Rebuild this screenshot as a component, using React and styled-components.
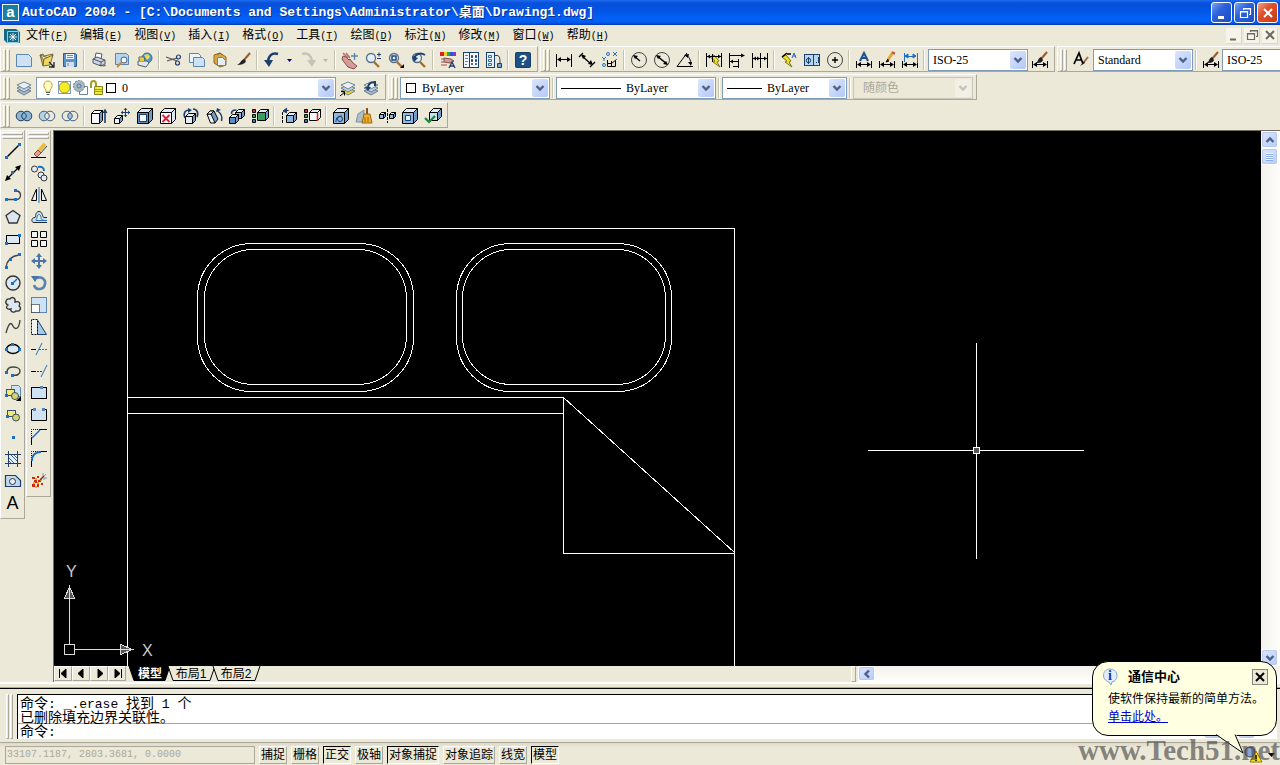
import React from 'react';
import styled, { createGlobalStyle, css } from 'styled-components';

const GlobalStyle = createGlobalStyle`
  *, *::before, *::after {
    box-sizing: border-box;
  }

  body {
    margin: 0;
    overflow: hidden;
    background: #ece9d8;
    color: #000;
    font: 12px/16px 'Liberation Sans', 'Noto Sans CJK SC', sans-serif;
  }

  button, select, input {
    margin: 0;
    padding: 0;
    border: 0;
    background: none;
    color: inherit;
    font: inherit;
  }
`;

/* ---------- drawings ---------- */

const NAVY = '#1c3f6e';
const SKY = '#cfe2f3';
const STEEL = '#5b86b0';
const BLUE = '#1f6fc0';

const Svg = styled.svg`
  display: block;
  flex: none;
  overflow: visible;
  fill: none;
  stroke: #000;
`;

const Dots = ({ at, color = BLUE }) => (
  <g fill={color} stroke="none">
    {at.map(([x, y]) => <rect key={`${x}-${y}`} x={x} y={y} width="3" height="3" />)}
  </g>
);

const Cube = ({ x = 2, y = 2, s = 8, d = 4, fill = '#8fb8de', top = '#e4eef8', side = '#6f9cc8' }) => (
  <g transform="translate(-.5 -.5)" strokeLinejoin="round">
    <path d={`M${x} ${y + d}l${d} ${-d}h${s}l${-d} ${d}z`} fill={top} />
    <path d={`M${x + s} ${y + d}l${d} ${-d}v${s}l${-d} ${d}z`} fill={side} />
    <path d={`M${x} ${y + d}h${s}v${s}h${-s}z`} fill={fill} />
  </g>
);

const Swatches = () => (
  <g>
    <path d="M.5 1.500h3v3h-3z" fill="#e02b2b" />
    <path d="M.5 6.500h3v3h-3z" fill="#37a05c" />
    <path d="M.5 11.500h3v3h-3z" fill="#2f7fd0" />
  </g>
);

const Lens = () => (
  <g>
    <path d="M9 10l5 5" stroke="#a8702c" strokeWidth="2.4" />
    <circle cx="6" cy="6" r="4.5" fill="#e3eef7" stroke="#56708a" strokeWidth="1.3" />
  </g>
);

const Brush = () => (
  <g>
    <path d="M15 1L9 8" stroke="#9a5a33" strokeWidth="2" />
    <path d="M9 7l2 2c-1 3-5 4-9 4c3-1 4-5 7-6z" fill="#222" stroke="none" />
  </g>
);

const Stack = ({ low = '#a9bccd' }) => (
  <g strokeWidth="0.8" stroke="#51697f">
    <path d="M1 11l7-3l7 3l-7 4z" fill={low} />
    <path d="M1 8l7-3l7 3l-7 4z" fill="#c3d2df" />
    <path d="M1 5l7-3l7 3l-7 4z" fill="#e8eff5" />
  </g>
);

const DimBar = () => (
  <g>
    <path d="M.5 9v7M15.5 9v7M2 12.5h12" />
    <path d="M1 12.5l4-2.5v5zM15 12.5l-4-2.5v5z" fill="#000" stroke="none" />
  </g>
);

const Bolt = ({ x = 0 }) => (
  <path d={`M${6 + x} 3l5 6l-2 1l3 5l-7-5l2-1l-5-4z`} fill="#f3e11c" stroke="#5d5608" strokeWidth="0.8" />
);

const glyphs = {
  fresh: <path d="M.5 2.500h12l3 3v9h-15z" fill={SKY} stroke={STEEL} />,
  open: (
    <g stroke="#6c6230" strokeWidth="0.9">
      <path d="M1 3l3-1l1 2l9-2l-2 5z" fill="#f2e08a" />
      <path d="M1 3l4 5l-1 6z" fill="#cbb24a" />
      <path d="M5 7l9-4l-3 10l-7 1z" fill="#efd65c" />
      <path d="M10 15h5v-5M15 15l-5-5" stroke="#222" strokeWidth="1.3" />
    </g>
  ),
  save: (
    <g>
      <path d="M1.5 1.5h12l1 1v12h-13z" fill="#5a92cc" stroke="#2b5c92" />
      <path d="M4 2h8v5H4z" fill="#edf3fa" stroke="none" />
      <path d="M4 10h8v5H4z" fill="#d5dfe9" stroke="none" />
      <path d="M5 3.5h6M5 5.5h6M6 11v3" stroke="#6d8cab" />
    </g>
  ),
  print: (
    <g stroke="#4d5a6a">
      <path d="M5 1l6 1l-1 5l-6-1z" fill="#fff" />
      <path d="M2 7l4-2l8 3v4l-4 2l-8-3z" fill="#ccd5e0" />
      <path d="M2 7l8 3v4M10 10l4-2" />
      <path d="M8 13l5 1l2-1" stroke="#555" />
    </g>
  ),
  preview: (
    <g>
      <path d="M1.5 1.5h11l2 2v9h-13z" fill="#b4d4ef" stroke={STEEL} />
      <circle cx="10" cy="8" r="3" fill="#f1f6fb" stroke="#445f7c" />
      <path d="M8 10l-5 5" stroke="#c78c3b" strokeWidth="2" />
    </g>
  ),
  publish: (
    <g>
      <circle cx="10" cy="6" r="5" fill="#4f9ad6" stroke="#356a96" />
      <path d="M7 3l4-1l2 3l-3 3z" fill="#f2dc3f" stroke="none" />
      <path d="M2 5h5l1 3h-6zM1 9h9l2 2l-3 4l-8-2z" fill="#e4e6ea" stroke="#53606e" />
      <path d="M3 6h4v3h-4z" fill="#f2c938" stroke="none" />
    </g>
  ),
  cut: (
    <g strokeWidth="1.2">
      <path d="M0 5l11 4M1 9l10-3" stroke="#555" />
      <circle cx="12.500" cy="5" r="2" stroke={NAVY} />
      <circle cx="11.500" cy="11" r="2" stroke={NAVY} />
    </g>
  ),
  copy: (
    <g stroke={STEEL}>
      <path d="M.5 1.500h9l2 2v7h-11z" fill="#eef5fb" />
      <path d="M4.500 5.500h9l2 2v7h-11z" fill={SKY} />
    </g>
  ),
  paste: (
    <g>
      <path d="M2 3l6-2l6 4v8l-6 2l-6-4z" fill="#d9a844" stroke="#8a6a22" />
      <path d="M5.500 5.500h5l3 3v5h-8z" fill="#e2eef9" stroke={STEEL} />
      <path d="M5 3l3-2l2 2" stroke="#666" />
    </g>
  ),
  brush: <Brush />,
  undo: (
    <g stroke={NAVY}>
      <path d="M14 2C8 0 4 4 4 11" strokeWidth="2.600" />
      <path d="M0 8h9l-4 7z" fill={NAVY} stroke="none" />
    </g>
  ),
  redo: (
    <g stroke="#c5c3b8">
      <path d="M2 2c6-2 10 2 10 9" strokeWidth="2.600" />
      <path d="M7 8h9l-4 7z" fill="#c5c3b8" stroke="none" />
    </g>
  ),
  pan: (
    <g>
      <path d="M1 4l3 1l3 3l1-1l3 4l4 3l-3 3l-6-2l-4-5l-2-3z" fill="#d79a94" stroke="#80524f" />
      <path d="M1 1l5 5M4 1l4 5" stroke="#b56f69" strokeWidth="1.500" />
      <path d="M9 4h7M12.500 1v7" stroke={STEEL} strokeWidth="1.400" />
    </g>
  ),
  zoomRealtime: (
    <g><Lens /><path d="M12 2.500h4M14 .5v4M12 6.500h4" stroke={NAVY} /></g>
  ),
  zoomWindow: (
    <g><Lens /><rect x="4" y="4" width="4" height="4" stroke={NAVY} strokeWidth="1.400" /><path d="M16 12v4h-4z" fill="#000" stroke="none" /></g>
  ),
  zoomPrevious: (
    <g><Lens /><path d="M3 7c1-5 6-7 11-4" stroke={NAVY} strokeWidth="2" /><path d="M1 4l6 2l-4 4z" fill={NAVY} stroke="none" /></g>
  ),
  properties: (
    <g stroke="none">
      <path d="M0 0h4v4H0z" fill="#d81f2a" /><path d="M4 0h3v4H4z" fill="#f0d51d" />
      <path d="M7 0h3v4H7z" fill="#28a83a" /><path d="M10 0h3v4h-3z" fill="#2a55cf" />
      <path d="M13 0h3v4h-3z" fill="#a12cc0" />
      <path d="M4 6l7 1l3 2l-4 2l-6-1z" fill="#d79a94" stroke="#80524f" />
      <path d="M1 7h3M1 10h3M1 13h6" stroke="#b04a40" />
      <path d="M9 16l3-6l3 6M10 14h4" stroke={NAVY} strokeWidth="1.300" />
    </g>
  ),
  designCenter: (
    <g>
      <rect x=".5" y=".5" width="15" height="15" fill="#f4f8fc" stroke={NAVY} />
      <path d="M6.500 1v14" stroke={NAVY} />
      <path d="M2 3.500h3M2 6.500h3M2 9.500h3M2 12.500h2" stroke={STEEL} />
      <g stroke={NAVY}><path d="M8.500 3.500h1v2h-1zM12.500 3.500h1v2h-1zM8.500 7.500h1v2h-1zM12.500 7.500h1v2h-1zM8.500 11.500h1v1h-1zM12.500 11.500h1v1h-1z" /></g>
    </g>
  ),
  toolPalettes: (
    <g>
      <rect x=".5" y=".5" width="8" height="15" fill="#e9f2fa" stroke={NAVY} />
      <path d="M2.500 3.500h3v2h-3zM2.500 7.500h3v2h-3zM2.500 11.500h3v2h-3z" stroke={BLUE} />
      <path d="M8 3.500h3c3 0 3 4 3 8" stroke={NAVY} />
      <path d="M11.500 11.500h4v4h-4z" fill="#79a3cb" stroke={NAVY} />
    </g>
  ),
  help: (
    <g>
      <rect x=".5" y=".5" width="15" height="15" rx="1" fill="#1c5086" stroke="#173e67" />
      <text x="8" y="13" fontFamily="Liberation Sans, sans-serif" fontSize="14" fontWeight="bold" textAnchor="middle" fill="#fff" stroke="none">?</text>
    </g>
  ),
  dimLinear: (
    <g><path d="M.5 2v13M15.500 2v13M2 7.500h12" /><path d="M1 7.500l4-2.500v5zM15 7.500l-4-2.500v5z" fill="#000" stroke="none" /></g>
  ),
  dimAligned: (
    <g><path d="M0 5l4-4M11 15l5-5M3 4l9 8" strokeWidth="1.300" /><path d="M2 2l5 2l-3 3zM14 13l-5-1l3-4z" fill="#000" stroke="none" /></g>
  ),
  dimOrdinate: (
    <g>
      <path d="M5.500 8v6.500h8V9M5.500 11.500h4l5-4M9.500 15V9" />
      <path d="M11 0l4 4M15 0l-4 4M0 5l2 2l2-2M2 7v2" stroke={BLUE} />
      <circle cx="6" cy="2" r="1.500" stroke={BLUE} /><circle cx="2" cy="13" r="1.500" stroke={BLUE} />
    </g>
  ),
  dimRadius: (
    <g><circle cx="8" cy="8" r="7.500" stroke="#444" /><path d="M3 4l6 5" strokeWidth="1.300" /><path d="M2 3l5 1l-3 3z" fill="#000" stroke="none" /></g>
  ),
  dimDiameter: (
    <g><circle cx="8" cy="8" r="7.500" stroke="#444" /><path d="M3 4l10 8" strokeWidth="1.600" /><path d="M2 3l5 1l-3 3zM14 13l-5-1l3-3z" fill="#000" stroke="none" /></g>
  ),
  dimAngular: (
    <g><path d="M10 1L0 14.500h16" /><path d="M9 3c3 1 5 6 5 9" /><path d="M7 3l5-1l-1 4zM14 14l-3-4h4z" fill="#000" stroke="none" /></g>
  ),
  dimQuick: (
    <g><Bolt x={2} /><path d="M.5 1v14M15.500 1v14M6.500 2v8M1 4.500h14" /><path d="M1 4.500l3-2v4zM15 4.500l-3-2v4z" fill="#000" stroke="none" /></g>
  ),
  dimBaseline: (
    <g><path d="M.5 1v15M1 3.500h13M9.500 7v9M1 9.500h8M4 14.500h5" /><path d="M16 3.500l-4-2v4zM1 9.500l3-2v4z" fill="#000" stroke="none" /></g>
  ),
  dimContinue: (
    <g><path d="M.5 1v15M8.500 1v15M15.500 1v15M1 6.500h14" /><path d="M1 6.500l3-2v4zM8 6.500l-3-2v4zM15 6.500l-3-2v4z" fill="#000" stroke="none" /></g>
  ),
  leader: (
    <g><Bolt x={-1} /><path d="M1 5l5-4M6 2h4" strokeWidth="1.600" /><path d="M11 6l2-5l2 5M12 4h3" stroke={BLUE} /></g>
  ),
  tolerance: (
    <g stroke={NAVY}><rect x=".5" y="2.500" width="15" height="11" fill="#b8d6f0" /><path d="M9.500 3v10M4.500 5v7M12 10.500h1M14.500 5v6" /><circle cx="4.500" cy="8.500" r="2.200" /></g>
  ),
  centerMark: <g><circle cx="8" cy="8" r="7.500" stroke="#444" /><path d="M5 8h6M8 5v6" strokeWidth="1.400" /></g>,
  dimTextEdit: <g><DimBar /><path d="M4 9l4-8l4 8M5 6h6" stroke="#1f4f8f" strokeWidth="2" /></g>,
  dimEdit: <g><DimBar /><path d="M14 0L9 8" stroke="#e2a63a" strokeWidth="3" /><path d="M9 7l-2 3l3-1" fill="#222" /><path d="M15 0l-1 2" stroke="#c9483b" strokeWidth="3" /></g>,
  dimUpdate: <g><DimBar /><path d="M2.500 1v9M15.500 1v10M3 4.500h11M3 4l3-2v4zM14 4l-3-2v4z" stroke={BLUE} fill={BLUE} /></g>,
  dimStyle: <g><DimBar /><path d="M15 0L9 7" stroke="#9a5a33" strokeWidth="2" /><path d="M9 5l2 3c-1 3-4 3-7 3c2-1 2-5 5-6z" fill="#222" stroke="none" /></g>,
  textStyle: <g><path d="M1 12L6 1l4 11M3 8h6" strokeWidth="1.700" /><path d="M15 5l-4 5" stroke="#a8673c" strokeWidth="2" /><path d="M11 9l1 2l-5 3z" fill="#222" stroke="none" /></g>,

  layers: <Stack />,
  bulb: (
    <g><path d="M5 10C1 6 3 1 7 1s6 5 2 9v2H5z" fill="#fffcc0" stroke="#b5a52e" /><path d="M5 12.500h4M5.500 14.500h3" stroke="#555" /></g>
  ),
  sun: <g><rect x="1.500" y="1.500" width="12" height="12" stroke="#7d9cba" /><circle cx="7.500" cy="7.500" r="5.500" fill="#f6ec24" stroke="#9d942e" /></g>,
  viewport: <g><path d="M6.500 6.500h8v8h-8z" fill="#fff" stroke="#6f8496" /><circle cx="6" cy="6" r="5.500" fill="#a7bac4" stroke="#61788a" strokeDasharray="2 1" /><circle cx="6" cy="6" r="2" stroke="#61788a" /></g>,
  unlock: <g><path d="M2 8V4c0-4 5-4 5 0v4" stroke="#a59d24" strokeWidth="2" /><path d="M5.500 6.500h8v8h-8z" fill="#efe83d" stroke="#8d861b" /><path d="M6 9.500h7M6 11.500h7" stroke="#a59d24" /></g>,
  swatch: <rect x="1.500" y="1.500" width="9" height="9" fill="#fff" strokeWidth="1" />,
  makeCurrent: <g><Stack low="#ead43e" /><path d="M0 16l5-4M1 11.500h3.500v4" /></g>,
  layerPrevious: <g><Stack /><path d="M5 8c0-4 3-6 7-6v4" stroke={NAVY} strokeWidth="2" /><path d="M2 7h6l-3 4z" fill={NAVY} stroke="none" /></g>,

  union: <g stroke={NAVY} fill="#8fb5cf"><circle cx="5" cy="8" r="4.800" /><circle cx="11" cy="8" r="4.800" /><path d="M8 4.500c-3 2-3 5 0 7c3-2 3-5 0-7" /></g>,
  subtract: <g stroke="#3e638c"><circle cx="11" cy="8" r="4.800" /><circle cx="5" cy="8" r="4.800" fill="#b7d0e2" /><path d="M8 4.500c-3 2-3 5 0 7c3-2 3-5 0-7" fill="#ece9d8" /></g>,
  intersect: <g stroke="#3e638c"><circle cx="5" cy="8" r="4.800" /><circle cx="11" cy="8" r="4.800" /><path d="M8 4.500c-3 2-3 5 0 7c3-2 3-5 0-7" fill="#9fc1da" /></g>,
  extrudeFace: (
    <g strokeLinejoin="round">
      <path d="M.5 5.500l3-3h8l-3 3z" fill="#fff" />
      <path d="M8.500 5.500l3-3v10l-3 3z" fill="#6f9cc8" />
      <path d="M.5 5.500h8v10h-8z" fill="#f7fafc" />
      <path d="M14 15V4" stroke={NAVY} strokeWidth="1.600" />
      <path d="M11.500 5L14 .5L16.500 5z" fill={NAVY} stroke="none" />
    </g>
  ),
  moveFace: <g><Cube x={1} y={8} s={5} d={3} fill="#f2f6fa" /><path d="M7 4.500h9M11.500 0v9" stroke={NAVY} /><path d="M11.500 0l2 2h-4zM11.500 9l2-2h-4zM7 4.500l2-2v4zM16 4.500l-2-2v4z" fill={NAVY} stroke="none" /></g>,
  offsetFace: <g><Cube x={1} y={1} s={11} d={4} fill="#5b8fc2" /><path d="M2.500 6.500h7v7h-7z" fill="#f7fafc" stroke={NAVY} /></g>,
  deleteFace: <g><Cube x={1} y={1} s={11} d={4} fill="#f7fafc" side="#dbe6f0" /><path d="M2.500 7l7 7M9.500 7l-7 7" stroke="#e01b2d" strokeWidth="1.800" /></g>,
  rotateFace: <g><Cube x={3} y={6} s={7} d={3} fill="#e2edf7" /><path d="M2 10c-2-5 0-8 4-8M10 1c4 0 6 4 4 8" stroke={NAVY} strokeWidth="1.700" /><path d="M5 0l4 2l-4 3z" fill={NAVY} stroke="none" /></g>,
  taperFace: <g strokeLinejoin="round"><path d="M1 6l3-3l4 0l4 8l-3 4z" fill="#6f9cc8" /><path d="M1 6l3.500 9h4.500L5 6z" fill="#eef5fb" /><path d="M1 6l3-3h4L5 6z" fill="#fff" /><path d="M15.500 13c1-4-1-8-4-10" stroke={NAVY} strokeWidth="1.500" /><path d="M10 4l1-4l4 2z" fill={NAVY} stroke="none" /></g>,
  copyFace: <g><Cube x={7} y={2} s={6} d={3} /><Cube x={1} y={7} s={6} d={3} fill="#5b8fc2" /><path d="M2.500 6c0-3 1-4 5-4" stroke={NAVY} strokeWidth="1.600" /></g>,
  colorFace: <g><Cube x={6} y={2} s={8} d={3} fill="#37a05c" /><Swatches /></g>,
  copyEdge: <g><Cube x={6} y={5} s={7} d={3} /><path d="M1.500 15V5c0-2 2-3 6-2.500" strokeDasharray="3 1" /><path d="M6 0L2 3l4 2" fill={NAVY} stroke={NAVY} /></g>,
  colorEdge: <g><Cube x={6} y={2} s={8} d={3} fill="#f8fafc" side="#f8fafc" /><path d="M13.500 5v8" stroke="#e02b2b" strokeWidth="1.600" /><Swatches /></g>,
  imprint: <g><Cube x={1} y={1} s={11} d={4} /><path d="M3 14c0-5 2-6 6-6" stroke={NAVY} /><circle cx="7" cy="11" r="2.500" stroke={NAVY} /></g>,
  clean: <g><path d="M0 14h8V2L2 6z" fill="#aebfcc" stroke="#7890a4" /><path d="M11 0v6" stroke="#8a4d1c" strokeWidth="2" /><path d="M8 6h6l2 9H6z" fill="#f1b02d" stroke="#9d6512" /><path d="M9 9v5M12 9v5" stroke="#9d6512" /></g>,
  separate: <g><Cube x={1} y={5} s={4} d={2} /><Cube x={11} y={5} s={4} d={2} /><path d="M8.500 1v14" strokeDasharray="3 1" /></g>,
  shell: <g><Cube x={1} y={1} s={11} d={4} /><path d="M3.500 7.500h5v5h-5z" fill="#e9f2fa" stroke={NAVY} /></g>,
  check: <g><Cube x={5} y={1} s={8} d={4} fill="#c8dff0" /><path d="M0 10l4 4l6-6" stroke="#168a38" strokeWidth="2.200" /></g>,

  line: <g><path d="M2 14L14 2" strokeWidth="1.500" /><Dots at={[[0, 13], [13, 0]]} /></g>,
  xline: <g><path d="M2 14L14 2" strokeWidth="1.300" /><path d="M0 16l2-6l4 4zM16 0l-6 2l4 4z" fill="#000" stroke="none" /><Dots at={[[6, 6]]} /></g>,
  polyline: <g><path d="M2 12.500h9M11 4c6 0 6 8.500 0 8.500" stroke="#444" strokeWidth="1.400" /><Dots at={[[0, 11], [9, 2], [9, 11]]} /></g>,
  polygon: <path d="M8 1.500l7 5l-3 7.500H4L1 6.500z" fill="#dce6ee" stroke="#333" strokeWidth="1.300" />,
  rectangle: <g><rect x="1.500" y="4.500" width="13" height="8" fill="#dce8f2" /><Dots at={[[0, 11], [13, 3]]} /></g>,
  arc: <g><path d="M1 14C2 8 6 3 14 2" stroke="#444" strokeWidth="1.400" /><Dots at={[[0, 13], [4, 5], [13, 0]]} /></g>,
  circle: <g><circle cx="8" cy="8" r="7" fill="#dce8f2" stroke="#333" strokeWidth="1.400" /><path d="M8 8l4-4" stroke={BLUE} strokeWidth="1.500" /><Dots at={[[6, 7]]} /></g>,
  cloud: <path d="M3 8C-1 6 1 1 5 2c2-3 6-1 5 3c4-1 6 1 4 4c3 2 1 6-3 5c-2 2-6 1-5-2c-4 1-6-2-3-4z" fill="#dfe7ee" stroke="#333" strokeWidth="1.300" />,
  spline: <path d="M1 14C4 3 6 3 8 7s6 4 7-6" stroke="#444" strokeWidth="1.400" />,
  ellipse: <g><ellipse cx="8" cy="8" rx="6.500" ry="4.500" fill="#dce8f2" strokeWidth="1.400" /><Dots at={[[0, 7], [6, 2], [13, 7]]} /></g>,
  ellipseArc: <g><path d="M2 9c0-7 13-6 13-1c0 3-3 5-7 4" stroke="#444" strokeWidth="1.500" /><Dots at={[[0, 8], [6, 11]]} /></g>,
  insertBlock: <g><path d="M6.500 .5h7l2 2v9h-9z" fill={SKY} stroke={STEEL} /><rect x="1.500" y="4.500" width="8" height="6" fill="#f0ea7a" stroke="#37506b" /><circle cx="10" cy="11" r="3.500" fill="#d6d36d" stroke="#37506b" /><path d="M16 11v5h-5z" fill="#000" stroke="none" /><Dots at={[[0, 9]]} /></g>,
  makeBlock: <g><rect x="2.500" y="3.500" width="8" height="6" fill="#f0ea7a" stroke="#37506b" /><circle cx="11" cy="10.500" r="3.500" fill="#d6d36d" stroke="#37506b" /><Dots at={[[1, 8]]} /></g>,
  point: <Dots at={[[7, 7]]} />,
  hatch: <g stroke={NAVY}><rect x="3.500" y="3.500" width="9" height="9" fill="#e4eff8" /><path d="M0 3.500h16M0 12.500h16M3.500 0v16M12.500 0v16" /><path d="M3 6l7 7M3 9l4 4M5 3l8 8M8 3l5 5" strokeWidth=".8" /></g>,
  region: <g><path d="M.5 2.500h10l5 5v6H.5z" fill="#c1d9ec" stroke={NAVY} strokeWidth="1.200" /><circle cx="7.500" cy="8.500" r="3" fill="#e8f1f8" stroke="#333" /></g>,

  erase: <g><path d="M14 1L7 9" stroke="#e8bd42" strokeWidth="4" /><path d="M16 3l-7 8" stroke="#35485c" /><path d="M7 7l3 3l-4 4l-3-3z" fill="#e89b94" stroke="#8f4d48" /><path d="M0 14.500h15" /></g>,
  duplicate: <g stroke="#333"><circle cx="3.500" cy="4" r="3" fill="#e4ecf3" /><circle cx="10" cy="10" r="3" fill="#e4ecf3" /><circle cx="13" cy="13" r="3" fill="#e4ecf3" /><path d="M7 2c4-1 6 1 6 4" stroke={BLUE} strokeWidth="2" /></g>,
  mirror: <g><path d="M5.500 2v11.500H.5zM10.500 2v11.500h5z" fill="#eef3f7" /><path d="M8 0v16" stroke={BLUE} /></g>,
  offset: <g><path d="M16 13.500H3c-3 0-3-5 1-5c1 0 0-6 4-6s3 6 5 6h3" fill={SKY} stroke="#222" /><path d="M16 11.500H5c0-2 1-1 1-3c0-4 4-4 4 0c0 3 3 3 6 3" fill="#ece9d8" stroke={BLUE} /></g>,
  array: <g fill="#f0f3f5"><path d="M.5 .5h6v6h-6zM9.500 .5h6v6h-6zM.5 9.500h6v6h-6zM9.500 9.500h6v6h-6z" /></g>,
  move: <g fill="#4876a8" stroke="none"><path d="M7 2h2v12H7z" /><path d="M2 7h12v2H2z" /><path d="M8 0l3 4H5zM8 16l3-4H5zM0 8l4-3v6zM16 8l-4-3v6z" /></g>,
  rotate: <g><path d="M6 3c5-2 9 2 8 6c-1 6-9 7-11 1" stroke="#5a83ad" strokeWidth="2.600" /><path d="M0 1l8 0l-4 6z" fill="#4876a8" stroke="none" /></g>,
  scale: <g><rect x=".5" y=".5" width="15" height="15" fill={SKY} stroke={STEEL} /><rect x=".5" y="7.500" width="8" height="8" fill="#fff" strokeDasharray="1 1" /></g>,
  stretch: <g><path d="M6.500 1l9 14.500h-9z" fill="#a8c8e4" stroke={NAVY} /><path d="M.5 .5v15h6V.5z" fill="#f4f4ee" strokeDasharray="2 1" /></g>,
  trim: <g><path d="M0 8.500h5" /><path d="M8 8.500h8" stroke={BLUE} strokeDasharray="2 1" /><path d="M5 14l6-12" stroke={BLUE} /></g>,
  extend: <g><path d="M0 8.500h5" /><path d="M6 8.500h6" stroke={NAVY} strokeDasharray="2 1" /><path d="M10 14l6-12" stroke={BLUE} /></g>,
  breakPoint: <g><rect x=".5" y="2.500" width="15" height="11" fill={SKY} /><Dots at={[[9, 1]]} color={STEEL} /></g>,
  breakGap: <g><path d="M3 2.500H.5v11h15v-11H13" fill={SKY} /><Dots at={[[2, 1], [11, 1]]} color={STEEL} /></g>,
  chamfer: <g><path d="M.5 16V9M9 .5h7" /><path d="M.5 9V.5H9" strokeDasharray="1 1" /><path d="M1 9L9 1" stroke={BLUE} strokeWidth="1.400" /></g>,
  fillet: <g><path d="M.5 16V9M9 .5h7" /><path d="M.5 9V.5H9" strokeDasharray="1 1" /><path d="M1 10C1 4 4 1 10 1" stroke={BLUE} strokeWidth="2" /></g>,
  explode: (
    <g stroke="none">
      <path d="M1 4h3v2H1zM6 3h2v2H6zM3 7h3v3H3zM7 7h3v2H7zM1 11h3v3H1zM6 11h2v3H6zM10 10h2v2h-2z" fill="#c8281a" />
      <path d="M4 5h2v2H4zM2 9h2v2H2zM6 9h2v2H6zM4 13h2v2H4zM9 6h2v2H9z" fill="#f0a51e" />
      <path d="M9 7l4-4" stroke="#7a2a1a" strokeWidth="1.500" />
      <path d="M12 0v3M15 1l-2 2M16 5h-3M13 7V5" stroke="#7f9ab4" />
    </g>
  ),
};

const Icon = ({ name, size = 16 }) => (
  <Svg width={size} height={size} viewBox="0 0 16 16" aria-hidden="true">{glyphs[name]}</Svg>
);

const Chevron = ({ dir = 'down', color = '#4d6185' }) => {
  const turn = { down: 0, left: 90, up: 180, right: 270 }[dir];
  return (
    <Svg width="10" height="10" viewBox="0 0 10 10" aria-hidden="true">
      <path d="M1.500 3L5 6.500L8.500 3" stroke={color} strokeWidth="2.400" transform={`rotate(${turn} 5 5)`} />
    </Svg>
  );
};

/* ---------- window frame ---------- */

const Window = styled.div`
  position: relative;
  display: flex;
  flex-direction: column;
  height: 100vh;
  overflow: hidden;
`;

const TitleBar = styled.header`
  display: flex;
  align-items: center;
  gap: 2px;
  flex: none;
  height: 25px;
  padding: 0 2px;
  background: linear-gradient(#1c6cf0 0, #0a50d8 3px, #0254e3 10px, #0362fb 20px, #0456e4 23px, #0238b0 25px);
`;

const Title = styled.h1`
  flex: 1;
  margin: 0 0 0 1px;
  overflow: hidden;
  white-space: nowrap;
  color: #fff;
  font: bold 13px/20px 'Liberation Mono', 'Noto Sans CJK SC', monospace;
  text-shadow: 1px 1px #0b2f8a;
`;

const CaptionButton = styled.button`
  display: grid;
  place-items: center;
  width: 21px;
  height: 21px;
  border: 1px solid #fff;
  border-radius: 3px;
  background: ${({ $close }) => ($close
    ? 'linear-gradient(135deg, #f0a088, #e0502c 40%, #c83a14)'
    : 'linear-gradient(135deg, #7ba4f4, #2c62dc 40%, #1c4cc4)')};
`;

const MenuBar = styled.nav`
  display: flex;
  align-items: center;
  flex: none;
  height: 21px;
  padding: 0 2px 0 4px;
`;

const MenuButton = styled.button`
  padding: 0 6px;
  white-space: nowrap;
  font-size: 12px;
  line-height: 18px;
`;

const Latin = styled.span`
  font-family: 'Liberation Mono', monospace;
  font-size: ${({ $size = 10 }) => $size}px;
`;

const Spacer = styled.div`
  flex: ${({ $grow = 1 }) => $grow};
`;

const ChildButtons = styled.div`
  display: flex;
  gap: 2px;
`;

const ChildButton = styled.button`
  display: grid;
  place-items: center;
  width: 16px;
  height: 16px;
  background: #f6f4ea;
  border-right: 1px solid #dcd8c4;
  border-bottom: 1px solid #dcd8c4;
`;

/* ---------- toolbars ---------- */

const ToolbarRow = styled.div`
  display: flex;
  gap: 2px;
  flex: none;
  height: 28px;
  overflow: hidden;
`;

const raised = css`
  border: 1px solid;
  border-color: #fff #aca899 #aca899 #fff;
`;

const Bar = styled.div`
  display: flex;
  align-items: center;
  flex: none;
  height: 26px;
  padding: 2px 3px 0 2px;
  ${raised}
`;

const Grip = styled.span`
  display: flex;
  flex-direction: ${({ $across }) => ($across ? 'column' : 'row')};
  flex: none;
  gap: 1px;
  ${({ $across }) => ($across
    ? 'width: 21px; height: 7px; margin: 1px 0;'
    : 'align-self: stretch; width: 7px; margin-right: 2px;')}

  &::before,
  &::after {
    content: '';
    flex: 1;
    ${raised}
  }
`;

const ToolButton = styled.button`
  display: grid;
  place-items: center;
  flex: none;
  width: ${({ $narrow }) => ($narrow ? 13 : 23)}px;
  height: 22px;
`;

const Divider = styled.span`
  flex: none;
  align-self: stretch;
  width: 2px;
  margin: 1px 2px;
  border-left: 1px solid #c5c2b0;
  border-right: 1px solid #fff;
`;

const ComboBox = styled.label`
  display: flex;
  align-items: center;
  flex: none;
  width: ${({ $width }) => $width}px;
  height: 22px;
  margin-left: ${({ $gap }) => $gap}px;
  padding: 1px 1px 1px 4px;
  border: 1px solid ${({ $disabled }) => ($disabled ? '#c9c7ba' : '#7f9db9')};
  background: ${({ $disabled }) => ($disabled ? '#ece9d8' : '#fff')};
  color: ${({ $disabled }) => ($disabled ? '#aca899' : '#000')};
`;

const Select = styled.select`
  flex: 1;
  min-width: 0;
  padding-left: ${({ $inset }) => ($inset ? 5 : 0)}px;
  appearance: none;
  outline: 0;
  font: 12px/16px 'Liberation Serif', 'Noto Sans CJK SC', serif;

  &:disabled {
    color: #aca899;
    opacity: 1;
  }
`;

const ArrowBox = styled.span`
  display: grid;
  place-items: center;
  flex: none;
  width: 16px;
  height: 18px;
  border-radius: 2px;
  background: ${({ $disabled }) => ($disabled ? '#f2f0e6' : 'linear-gradient(135deg, #dbe6fe, #b4c8f6)')};
  pointer-events: none;
`;

const LineSample = styled.span`
  flex: none;
  width: ${({ $width }) => $width}px;
  border-top: 1px solid #000;
`;

const Combo = ({ label, value, width, gap = 0, disabled, children }) => (
  <ComboBox $width={width} $gap={gap} $disabled={disabled}>
    {children}
    <Select aria-label={label} defaultValue={value} disabled={disabled} $inset={disabled || Boolean(children)}>
      <option>{value}</option>
    </Select>
    <ArrowBox $disabled={disabled}><Chevron color={disabled ? '#c5c3b6' : undefined} /></ArrowBox>
  </ComboBox>
);

// '|' is a divider, 'more' a history arrow beside the tool before it, 'none' the same arrow with nothing to list
const arrowColors = { more: '#00008b', none: '#b9b6a6' };

const Tools = ({ items }) => items.split(' ').map((name, i) => {
  if (name === '|') return <Divider key={i} />;
  if (arrowColors[name]) {
    return (
      <ToolButton key={i} $narrow aria-label="history">
        <Svg width="5" height="3" viewBox="0 0 5 3"><path d="M0 0h5L2.500 3z" fill={arrowColors[name]} stroke="none" /></Svg>
      </ToolButton>
    );
  }
  return <ToolButton key={i} aria-label={name}><Icon name={name} /></ToolButton>;
});

/* ---------- work area ---------- */

const Workspace = styled.main`
  display: flex;
  flex: 1;
  min-height: 0;
`;

const Palette = styled.aside`
  display: flex;
  flex-direction: column;
  align-items: center;
  align-self: flex-start;
  flex: none;
  width: 25px;
  margin-right: 1px;
  padding-bottom: 4px;
  ${raised}
`;

const TextTool = styled.span`
  font: 18px/22px 'Liberation Sans', sans-serif;
`;

const Document = styled.section`
  display: flex;
  flex: 1;
  flex-direction: column;
  min-width: 0;
  margin-left: 1px;
  border-top: 1px solid #716f64;
  border-left: 1px solid #716f64;
`;

const View = styled.div`
  display: flex;
  flex: 1;
  min-height: 0;
`;

const Canvas = styled.svg`
  flex: 1;
  min-width: 0;
  height: 100%;
  background: #000;
  fill: none;
  stroke: #fff;
  shape-rendering: crispEdges;
`;

const ScrollTrack = styled.div`
  display: flex;
  flex-direction: ${({ $horizontal }) => ($horizontal ? 'row' : 'column')};
  flex: ${({ $horizontal }) => ($horizontal ? '5' : 'none')};
  width: ${({ $horizontal }) => ($horizontal ? 'auto' : '19px')};
  padding: ${({ $horizontal }) => ($horizontal ? '0' : '0 2px 0 0')};
  background: linear-gradient(${({ $horizontal }) => ($horizontal ? '180deg' : '90deg')}, #f3f1ec, #fefefb);
`;

const ScrollButton = styled.button`
  display: grid;
  place-items: center;
  flex: none;
  width: 17px;
  height: ${({ $low }) => ($low ? 15 : 17)}px;
  border: 1px solid #fff;
  border-radius: 3px;
  outline: 1px solid #b9c9ee;
  outline-offset: -2px;
  background: linear-gradient(135deg, #dce6fe, #b8cbf8);
`;

const ThumbRidges = styled.span`
  width: 7px;
  height: 8px;
  background: repeating-linear-gradient(#eef4fe 0 1px, #8caae6 1px 2px);
`;

const TabStrip = styled.div`
  display: flex;
  flex: none;
  height: 16px;
`;

const PageButton = styled.button`
  display: grid;
  place-items: center;
  width: 18px;
  height: 15px;
  ${raised}
`;

const Tab = styled.button`
  display: grid;
  place-items: center;
  width: ${({ $active }) => ($active ? 42 : 50)}px;
  height: 15px;
  margin-left: ${({ $active }) => ($active ? 3 : -5)}px;
  color: ${({ $active }) => ($active ? '#fff' : '#000')};
  font-weight: ${({ $active }) => ($active ? 'bold' : 'normal')};
  line-height: 14px;

  & > * {
    grid-area: 1 / 1;
  }
`;

const TabLabel = styled.span`
  z-index: 1;
`;

const SplitHandle = styled.span`
  width: 5px;
  margin-right: 2px;
  ${raised}
`;

const SheetTab = ({ label, active }) => (
  <Tab $active={active}>
    <Svg width={active ? 42 : 50} height="15" viewBox={active ? '0 0 42 15' : '0 0 50 15'} aria-hidden="true">
      <path d={active ? 'M0 0l5 14.500h31L41 0' : 'M2 0l5 14.500h37L49 0'} fill={active ? '#000' : '#ece9d8'} />
    </Svg>
    <TabLabel>{label}</TabLabel>
  </Tab>
);

/* ---------- command line and status ---------- */

const Splitter = styled.div`
  flex: none;
  height: 7px;
  border-top: 2px solid #fff;
  border-bottom: 1px solid #000;
  box-shadow: inset 0 -1px #aca899;
`;

const CommandPanel = styled.section`
  display: flex;
  flex: none;
  height: 53px;
  padding: 5px 3px 3px 6px;
`;

const CommandText = styled.div`
  display: flex;
  flex: 1;
  flex-direction: column;
  min-width: 0;
  margin-left: 2px;
  border-top: 1px solid #000;
  border-left: 1px solid #000;
  background: #fff;
  font-family: 'Noto Sans CJK SC', sans-serif;
  font-size: 14px;
`;

const History = styled.div`
  flex: none;
  height: 29px;
  padding: 0 2px;
  border-bottom: 1px solid #aca899;
`;

const Entry = styled.div`
  height: 14px;
  line-height: 14px;
  white-space: pre;
`;

const Prompt = styled.div`
  display: flex;
  align-items: center;
  flex: 1;
  min-height: 0;
  padding: 0 22px 0 2px;
  line-height: 15px;
`;

const PromptInput = styled.input`
  flex: 1;
  min-width: 0;
  margin-left: 8px;
  outline: 0;
`;

const StatusBar = styled.footer`
  display: flex;
  align-items: center;
  gap: 4px;
  flex: none;
  height: 23px;
  padding: 2px 4px 0 5px;
  border-top: 1px solid #aca899;
  background: linear-gradient(#dedac8, #ece9d8 5px);
`;

const Coordinates = styled.output`
  width: 250px;
  height: 18px;
  padding-left: 1px;
  border: 1px solid #aca899;
  color: #aca899;
  font: 10px/16px 'Liberation Mono', monospace;
  white-space: pre;
`;

const Toggle = styled.button`
  height: 18px;
  padding: 0 1px;
  border: 1px solid;
  border-color: ${({ $on }) => ($on ? '#000 #fff #fff #000' : '#fff #aca899 #aca899 #fff')};
  font-size: 12px;
  line-height: 16px;
  white-space: nowrap;
`;

/* ---------- balloon ---------- */

const Balloon = styled.div`
  position: absolute;
  right: 3px;
  bottom: 29px;
  width: 185px;
  height: 75px;
  padding: 6px 8px 0 15px;
  border: 1px solid #000;
  border-radius: 16px;
  background: #ffffe1;
`;

const BalloonHead = styled.div`
  display: flex;
  align-items: center;
  gap: 8px;
  margin-left: -6px;
`;

const BalloonTitle = styled.h2`
  flex: 1;
  margin: 0;
  font-size: 13px;
  line-height: 18px;
`;

const BalloonClose = styled.button`
  display: grid;
  place-items: center;
  width: 16px;
  height: 16px;
  border: 1px solid #8a887a;
  background: #ece9d8;
`;

const BalloonText = styled.p`
  margin: 5px 0 2px;
  line-height: 16px;
  white-space: nowrap;
`;

const BalloonLink = styled.a`
  display: block;
  color: #0000d8;
  line-height: 16px;
`;

const Tail = styled(Svg)`
  position: absolute;
  right: 32px;
  bottom: -19px;
`;

const Watermark = styled.div`
  position: absolute;
  right: 0;
  bottom: 0;
  color: rgba(70, 70, 70, 0.65);
  font: bold 29px/30px 'Liberation Serif', serif;
  pointer-events: none;
`;

const menus = [
  ['文件', 'F'], ['编辑', 'E'], ['视图', 'V'], ['插入', 'I'], ['格式', 'O'], ['工具', 'T'],
  ['绘图', 'D'], ['标注', 'N'], ['修改', 'M'], ['窗口', 'W'], ['帮助', 'H'],
];

const drawTools = 'line xline polyline polygon rectangle arc circle cloud spline ellipse ellipseArc insertBlock makeBlock point hatch region';
const modifyTools = 'erase duplicate mirror offset array move rotate scale stretch trim extend breakPoint breakGap chamfer fillet explode';

const toggles = [
  ['捕捉', false], ['栅格', false], ['正交', true], ['极轴', false],
  ['对象捕捉', true], ['对象追踪', false], ['线宽', false], ['模型', true],
];

const pageIcons = [
  ['first', 'M.5 0v9M7 0L2 4.500L7 9z'],
  ['previous', 'M6 0L1 4.500L6 9z'],
  ['next', 'M3 0l5 4.500L3 9z'],
  ['last', 'M8.500 0v9M2 0l5 4.500L2 9z'],
];

const windowIcons = {
  minimize: 'M2 10.500h6',
  restore: 'M4.500 3V1.500h7v6H10M1.500 4.500h7v6h-7zM4 2h8M1 5h8',
  close: 'M2 2l8 8M10 2l-8 8',
};

const WindowIcon = ({ name, color, width = 2 }) => (
  <Svg width="12" height="12" viewBox="0 0 12 12" aria-hidden="true">
    <path d={windowIcons[name]} stroke={color} strokeWidth={name === 'restore' ? 1.2 : width} />
  </Svg>
);

const Drawing = () => (
  <Canvas role="img" aria-label="Drawing1">
    <path d="M73.500 2000V97.500H680.500V2000" />
    <rect x="143.500" y="112.500" width="216" height="148" rx="54" />
    <rect x="150.500" y="118.500" width="202" height="135" rx="49" />
    <rect x="402.500" y="112.500" width="215" height="148" rx="54" />
    <rect x="408.500" y="118.500" width="203" height="135" rx="49" />
    <path d="M73.500 266.500H509.500M73.500 282.500H509.500M509.500 266.500V422.500H680.500M509.500 266.500L680.500 421.500" />
    <path d="M814 319.500h216M922.500 212v216" />
    <path d="M919.500 316.500h6v6h-6z" fill="#555" />
    <g stroke="#ddd">
      <path d="M10.500 513.500h10v10h-10zM15.500 513V467M20 518.500h47" />
      <path d="M15.500 455.500l-5 12h10zM78.500 518.500l-12-5v10z" fill="#555" />
      <path d="M15.500 457v10M67 518.500h10" />
    </g>
    <g fill="#ccc" stroke="none" fontFamily="Liberation Sans, sans-serif" fontSize="16">
      <text x="12" y="446">Y</text>
      <text x="88" y="525">X</text>
    </g>
  </Canvas>
);

const App = () => (
  <Window>
    <GlobalStyle />
    <TitleBar>
      <Svg width="17" height="17" viewBox="0 0 17 17" aria-hidden="true">
        <rect x=".5" y=".5" width="16" height="16" fill="#1a7f9c" stroke="#e8f4f8" />
        <text x="8.500" y="13" fontFamily="Liberation Sans, sans-serif" fontSize="15" fontWeight="bold" textAnchor="middle" fill="#fff" stroke="none">a</text>
      </Svg>
      <Title>AutoCAD 2004 - [C:\Documents and Settings\Administrator\桌面\Drawing1.dwg]</Title>
      <CaptionButton aria-label="minimize"><WindowIcon name="minimize" color="#fff" width={3} /></CaptionButton>
      <CaptionButton aria-label="restore"><WindowIcon name="restore" color="#fff" /></CaptionButton>
      <CaptionButton $close aria-label="close"><WindowIcon name="close" color="#fff" /></CaptionButton>
    </TitleBar>
    <MenuBar>
      <Svg width="16" height="16" viewBox="0 0 16 16" aria-hidden="true">
        <path d="M0 1h12l4 3v11H3l-3-3z" fill="#14688a" stroke="none" />
        <path d="M3.500 3.500h11v11h-11z" stroke="#8fd0e6" />
        <path d="M9 5v8M5 9h8M6 6l6 6M12 6l-6 6" stroke="#fff" strokeWidth=".9" />
      </Svg>
      {menus.map(([label, key]) => (
        <MenuButton key={key}>{label}<Latin>(<u>{key}</u>)</Latin></MenuButton>
      ))}
      <Spacer />
      <ChildButtons>
        {['minimize', 'restore', 'close'].map(name => (
          <ChildButton key={name} aria-label={`${name} drawing`}><WindowIcon name={name} color="#6b6a60" /></ChildButton>
        ))}
      </ChildButtons>
    </MenuBar>

    <ToolbarRow>
      <Bar>
        <Grip />
        <Tools items="fresh open save | print preview publish | cut copy paste brush | undo more redo none | pan zoomRealtime zoomWindow zoomPrevious | properties designCenter toolPalettes | help" />
      </Bar>
      <Bar>
        <Grip />
        <Tools items="dimLinear dimAligned dimOrdinate | dimRadius dimDiameter dimAngular | dimQuick dimBaseline dimContinue | leader tolerance centerMark | dimTextEdit dimEdit dimUpdate |" />
        <Combo label="标注样式" value="ISO-25" width={100} gap={1} />
        <Tools items="dimStyle" />
      </Bar>
      <Bar>
        <Grip />
        <Tools items="textStyle" />
        <Combo label="文字样式" value="Standard" width={100} gap={1} />
        <Tools items="| dimStyle" />
        <Combo label="标注样式" value="ISO-25" width={100} />
      </Bar>
    </ToolbarRow>
    <ToolbarRow>
      <Bar>
        <Grip />
        <Tools items="layers" />
        <Combo label="图层" value="0" width={300} gap={1}>
          <Icon name="bulb" /><Icon name="sun" /><Icon name="viewport" /><Icon name="unlock" />
          <Svg width="12" height="12" aria-hidden="true">{glyphs.swatch}</Svg>
        </Combo>
        <Tools items="makeCurrent layerPrevious" />
      </Bar>
      <Bar>
        <Grip />
        <Combo label="颜色" value="ByLayer" width={150}>
          <Svg width="12" height="12" aria-hidden="true">{glyphs.swatch}</Svg>
        </Combo>
        <Divider />
        <Combo label="线型" value="ByLayer" width={160}><LineSample $width={60} /></Combo>
        <Divider />
        <Combo label="线宽" value="ByLayer" width={125}><LineSample $width={35} /></Combo>
        <Divider />
        <Combo label="打印样式" value="随颜色" width={120} disabled />
      </Bar>
    </ToolbarRow>
    <ToolbarRow>
      <Bar>
        <Grip />
        <Tools items="union subtract intersect | extrudeFace moveFace offsetFace deleteFace rotateFace taperFace copyFace colorFace | copyEdge colorEdge | imprint clean separate shell check" />
      </Bar>
    </ToolbarRow>

    <Workspace>
      <Palette>
        <Grip $across />
        <Tools items={drawTools} />
        <ToolButton aria-label="text"><TextTool>A</TextTool></ToolButton>
      </Palette>
      <Palette>
        <Grip $across />
        <Tools items={modifyTools} />
      </Palette>
      <Document>
        <View>
          <Drawing />
          <ScrollTrack>
            <ScrollButton aria-label="scroll up"><Chevron dir="up" /></ScrollButton>
            <ScrollButton aria-label="scroll position"><ThumbRidges /></ScrollButton>
            <Spacer />
            <ScrollButton aria-label="scroll down"><Chevron /></ScrollButton>
          </ScrollTrack>
        </View>
        <TabStrip>
          {pageIcons.map(([name, d]) => (
            <PageButton key={name} aria-label={name}>
              <Svg width="9" height="9" viewBox="0 0 9 9"><path d={d} fill="#000" strokeWidth="1" /></Svg>
            </PageButton>
          ))}
          <SheetTab label="模型" active />
          <SheetTab label="布局1" />
          <SheetTab label="布局2" />
          <Spacer $grow={7} />
          <SplitHandle />
          <ScrollTrack $horizontal>
            <ScrollButton $low aria-label="scroll left"><Chevron dir="left" /></ScrollButton>
          </ScrollTrack>
        </TabStrip>
      </Document>
    </Workspace>

    <Splitter />
    <CommandPanel>
      <Grip />
      <CommandText>
        <History>
          <Entry>命令<Latin $size={13}>: _.erase </Latin>找到<Latin $size={13}> 1 </Latin>个</Entry>
          <Entry>已删除填充边界关联性。</Entry>
        </History>
        <Prompt>
          <label htmlFor="prompt">命令<Latin $size={13}>:</Latin></label>
          <PromptInput id="prompt" />
          <ScrollButton $low aria-label="scroll command left"><Chevron dir="left" /></ScrollButton>
          <ScrollButton $low aria-label="scroll command position" />
          <ScrollButton $low aria-label="scroll command right"><Chevron dir="right" /></ScrollButton>
        </Prompt>
      </CommandText>
    </CommandPanel>

    <StatusBar>
      <Coordinates>33107.1187, 2803.3681, 0.0000</Coordinates>
      {toggles.map(([label, on]) => (
        <Toggle key={label} $on={on} aria-pressed={on}>{label}</Toggle>
      ))}
      <Spacer />
      <Svg width="20" height="18" viewBox="0 0 20 18" aria-hidden="true">
        <circle cx="6" cy="6" r="5" fill="#8da3d4" stroke="#333d66" />
        <path d="M12 5l6 11H6z" fill="#ffe11a" stroke="#8c7a00" />
        <path d="M12 9v4M12 14v1" strokeWidth="1.500" />
      </Svg>
      <Svg width="8" height="6" viewBox="0 0 8 6" aria-hidden="true"><path d="M0 1h7L3.500 5z" fill="#000" stroke="none" /></Svg>
    </StatusBar>

    <Balloon role="status">
      <BalloonHead>
        <Svg width="18" height="18" viewBox="0 0 18 18" aria-hidden="true">
          <path d="M8 1c9 0 9 12 2 13l-1 3l-2-3C-1 12 0 1 8 1z" fill="#e2edfb" stroke="#8ba4c8" />
          <text x="8" y="12" fontFamily="Liberation Serif, serif" fontSize="14" fontWeight="bold" textAnchor="middle" fill="#0e3fb8" stroke="none">i</text>
        </Svg>
        <BalloonTitle>通信中心</BalloonTitle>
        <BalloonClose aria-label="close message"><WindowIcon name="close" color="#000" width={2} /></BalloonClose>
      </BalloonHead>
      <BalloonText>使软件保持最新的简单方法。</BalloonText>
      <BalloonLink href="#update">单击此处。</BalloonLink>
      <Tail width="28" height="20" viewBox="0 0 28 20" aria-hidden="true">
        <path d="M0 0h20l7 19z" fill="#ffffe1" stroke="none" />
        <path d="M0 .5L27 19L19 .5" />
      </Tail>
    </Balloon>
    <Watermark>www.Tech51.net</Watermark>
  </Window>
);

export default App;
